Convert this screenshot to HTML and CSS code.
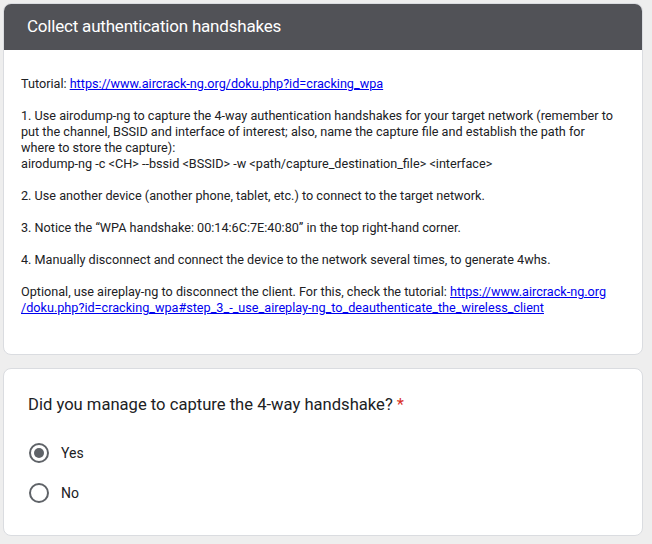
FILE: index.html
```html
<!DOCTYPE html>
<html>
<head>
<meta charset="utf-8">
<link rel="stylesheet" href="styles.css">
</head>
<body>
<main class="page">
  <section class="card section-card">
    <header class="section-header">Collect authentication handshakes</header>
    <div class="section-body">
      <p>Tutorial: <a href="#">https://www.aircrack-ng.org/doku.php?id=cracking_wpa</a></p>
      <p>1. Use airodump-ng to capture the 4-way authentication handshakes for your target network (remember to<br>put the channel, BSSID and interface of interest; also, name the capture file and establish the path for<br>where to store the capture):<br>airodump-ng -c &lt;CH&gt; --bssid &lt;BSSID&gt; -w &lt;path/capture_destination_file&gt; &lt;interface&gt;</p>
      <p>2. Use another device (another phone, tablet, etc.) to connect to the target network.</p>
      <p>3. Notice the “WPA handshake: 00:14:6C:7E:40:80” in the top right-hand corner.</p>
      <p>4. Manually disconnect and connect the device to the network several times, to generate 4whs.</p>
      <p>Optional, use aireplay-ng to disconnect the client. For this, check the tutorial: <a href="#">https://www.aircrack-ng.org<br>/doku.php?id=cracking_wpa#step_3_-_use_aireplay-ng_to_deauthenticate_the_wireless_client</a></p>
    </div>
  </section>
  <section class="card question-card">
    <div class="question-title">Did you manage to capture the 4-way handshake? <span class="required">*</span></div>
    <div class="options">
      <label class="option"><span class="radio checked"></span><span class="option-label">Yes</span></label>
      <label class="option"><span class="radio"></span><span class="option-label">No</span></label>
    </div>
  </section>
</main>
</body>
</html>
```
FILE: styles.css
```css
html, body {
  margin: 0;
  padding: 0;
  background: #eeeeee;
}
body {
  font-family: Roboto, "Liberation Sans", Arial, sans-serif;
  color: #202124;
}
.page {
  display: flex;
  flex-direction: column;
  gap: 13px;
  padding: 3px 9px 0 3px;
  width: 640px;
}
.card {
  background: #ffffff;
  border: 1px solid #dadce0;
  border-radius: 8px;
  overflow: hidden;
}
.section-card {
  height: 352px;
  box-sizing: border-box;
}
.section-header {
  background: #515257;
  color: #ffffff;
  font-size: 17px;
  letter-spacing: -0.2px;
  line-height: 24px;
  padding: 11px 24px 12px;
  margin: -1px -1px 0;
}
.section-body {
  padding: 26px 10px 0 17px;
  font-size: 12.65px;
  line-height: 16px;
}
.section-body p {
  margin: 0 0 16px;
  white-space: nowrap;
}
.section-body a {
  color: #0000ee;
}
.question-card {
  height: 168px;
  box-sizing: border-box;
  padding: 24px 24px 0;
}
.question-title {
  font-size: 16.6px;
  line-height: 24px;
}
.required {
  color: #d93025;
}
.options {
  display: flex;
  flex-direction: column;
  gap: 16px;
  margin-top: 24px;
}
.option {
  display: flex;
  align-items: center;
  gap: 12px;
  height: 24px;
  font-size: 14px;
}
.radio {
  width: 20px;
  height: 20px;
  box-sizing: border-box;
  border: 2px solid #5f6368;
  border-radius: 50%;
  display: flex;
  align-items: center;
  justify-content: center;
  margin-left: 1px;
}
.radio.checked::after {
  content: "";
  width: 10px;
  height: 10px;
  border-radius: 50%;
  background: #5f6368;
}
```
